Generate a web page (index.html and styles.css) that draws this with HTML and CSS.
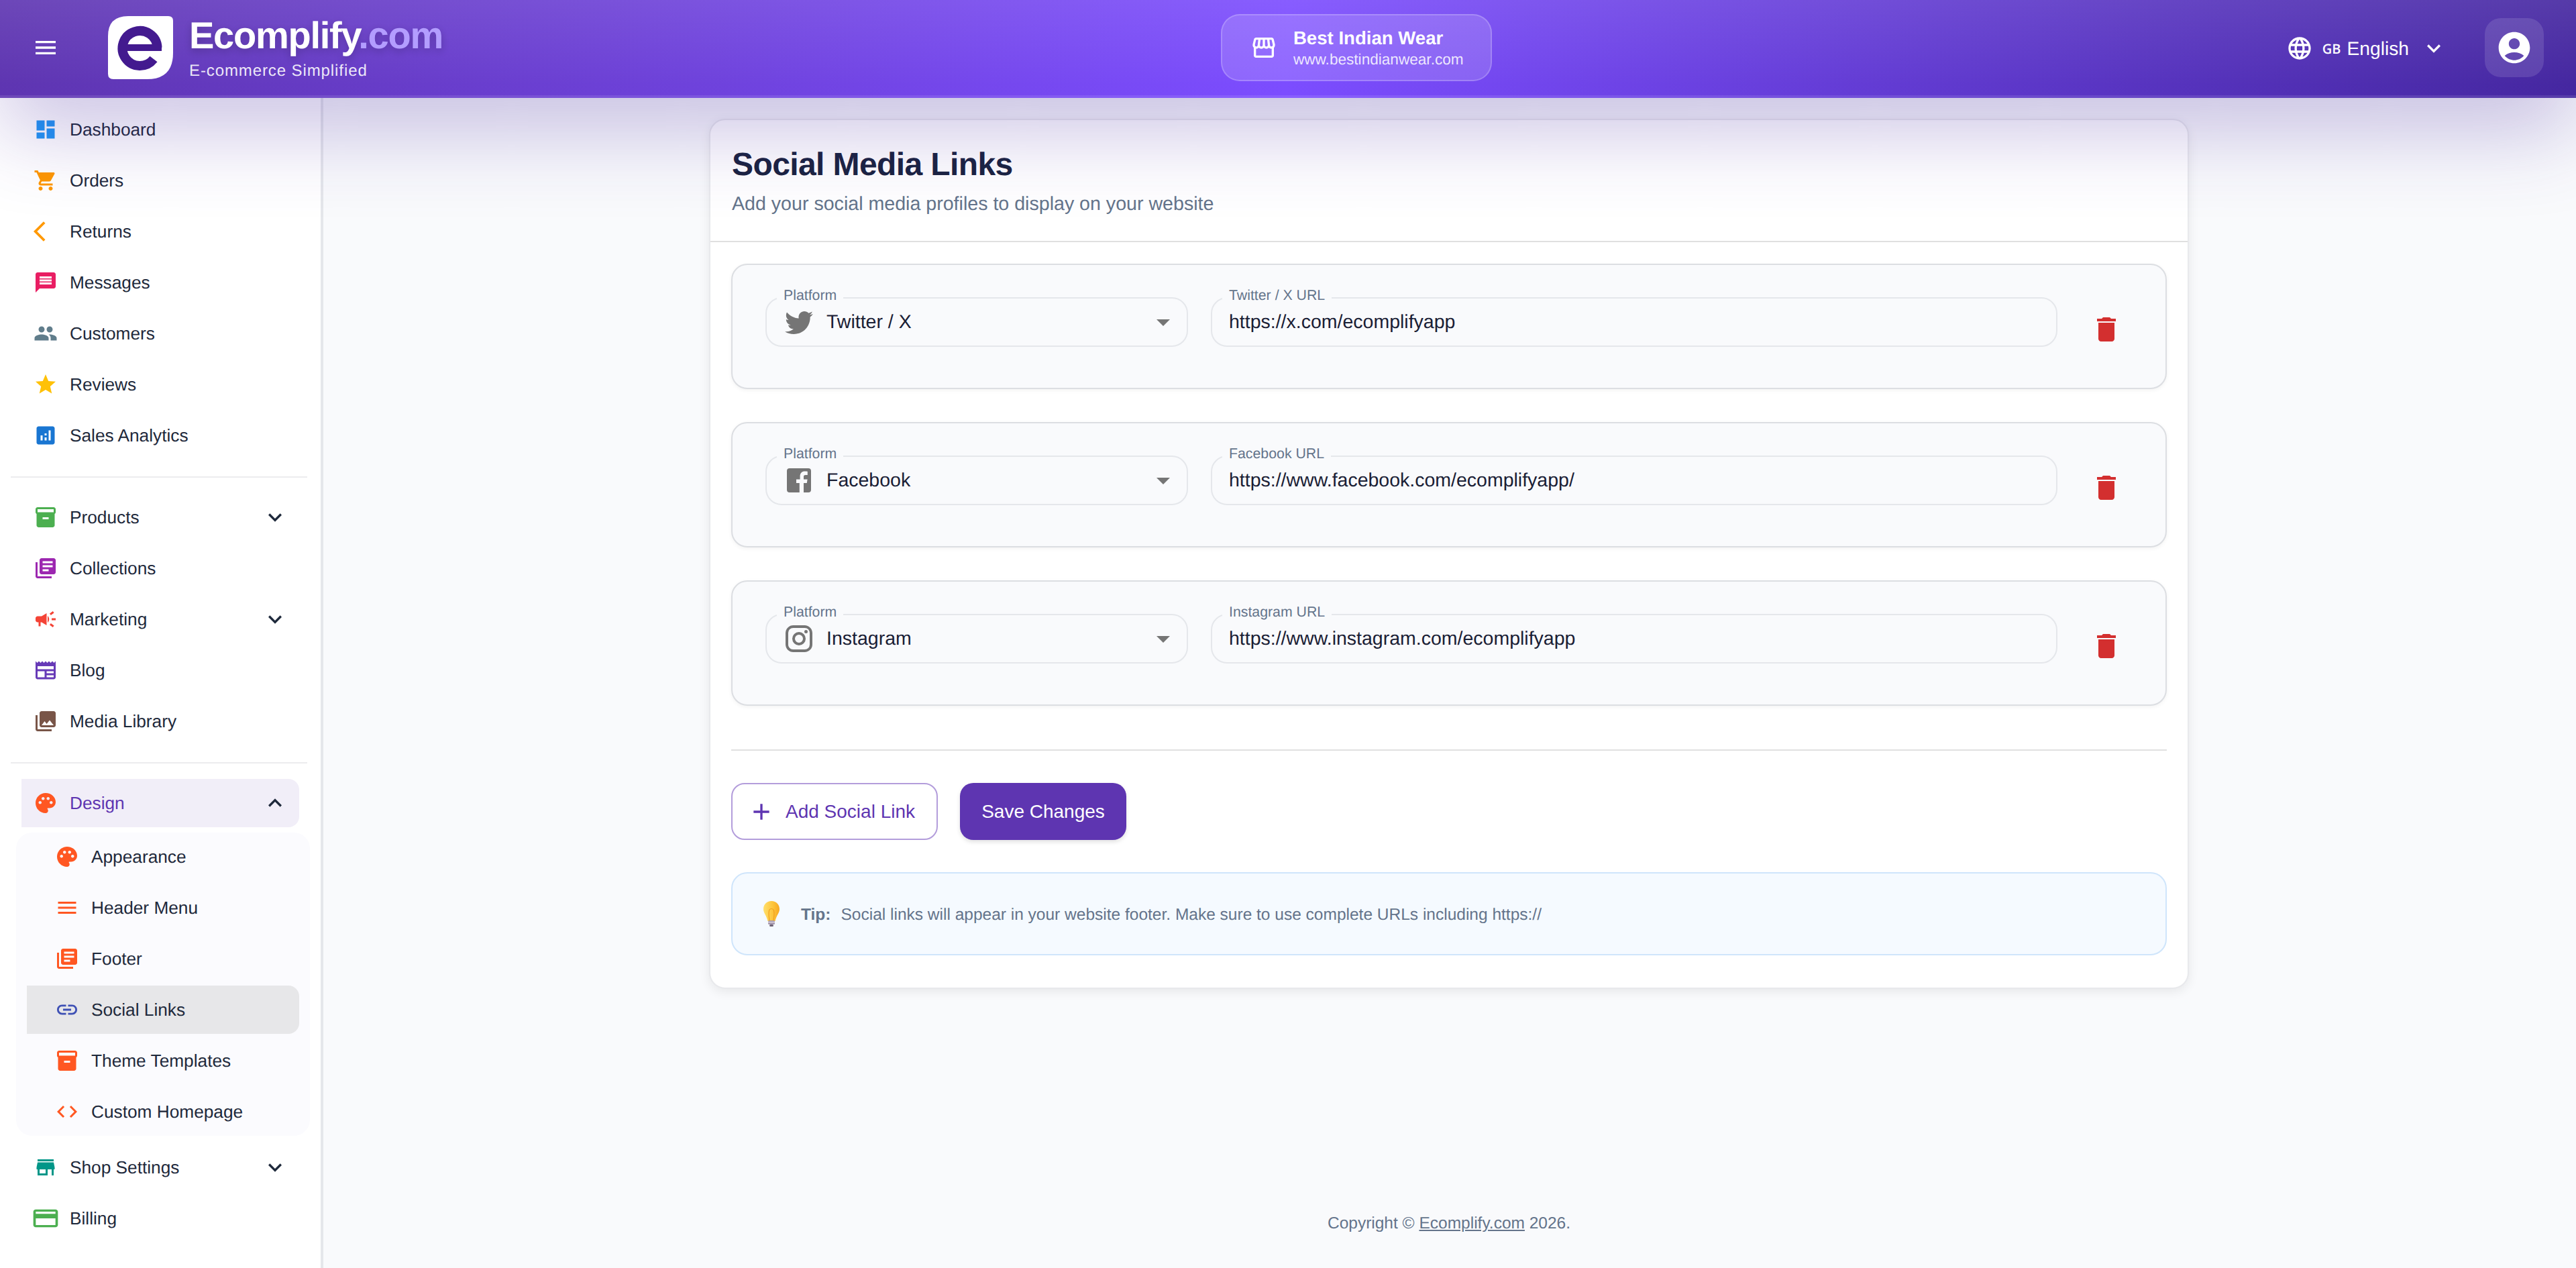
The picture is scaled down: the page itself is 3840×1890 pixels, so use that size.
FILE: index.html
```html
<!DOCTYPE html>
<html lang="en">

<head>
    <meta charset="UTF-8">
    <meta name="viewport" content="width=device-width, initial-scale=1.0">
    <title>Social Media Links</title>
    <link rel="stylesheet" href="styles.css">
</head>

<body>
    <header class="topbar">
        <button class="menu-btn">
            <svg class="icon-40" viewBox="0 0 24 24"><path d="M3 18h18v-2H3v2zm0-5h18v-2H3v2zm0-7v2h18V6H3z"/></svg>
        </button>
        <svg class="logo" viewBox="0 0 97 94">
            <path class="logo-bg" d="M30 0H90Q97 0 97 7V55Q97 94 58 94H8Q0 94 0 86V30Q0 0 30 0Z"/>
            <path class="logo-e" d="M73.5 47A26 26 0 1 0 68 64"/>
            <rect class="logo-bar" x="21" y="42" width="59" height="10"/>
        </svg>
        <div class="brand">
            <div class="brand-name">Ecomplify<span>.com</span></div>
            <div class="brand-tag">E-commerce Simplified</div>
        </div>
        <div class="store-chip">
            <svg class="icon-40" viewBox="0 0 24 24"><path d="M21.9 8.89l-1.05-4.37c-.22-.9-1-1.52-1.91-1.52H5.05c-.9 0-1.69.63-1.9 1.52L2.1 8.89c-.24 1.02-.02 2.06.62 2.88.08.11.19.19.28.29V19c0 1.1.9 2 2 2h14c1.1 0 2-.9 2-2v-6.94c.09-.09.2-.18.28-.28.64-.82.87-1.87.62-2.89zm-2.99-3.9l1.05 4.37c.1.42.01.84-.25 1.17-.14.18-.44.47-.94.47-.61 0-1.14-.49-1.21-1.14L16.98 5l1.93-.01zM13 5h1.96l.54 4.52c.05.39-.07.78-.33 1.07-.22.26-.54.41-.95.41-.67 0-1.22-.59-1.22-1.31V5zM8.49 9.52L9.04 5H11v4.69c0 .72-.55 1.31-1.29 1.31-.34 0-.65-.15-.89-.41-.25-.29-.37-.68-.33-1.07zm-4.45-.16L5.05 5h1.97l-.58 4.86c-.08.65-.6 1.14-1.21 1.14-.49 0-.8-.29-.93-.47-.27-.32-.36-.75-.26-1.17zM5 19v-6.03c.08.01.15.03.23.03.87 0 1.66-.36 2.24-.95.6.6 1.4.95 2.31.95.87 0 1.65-.36 2.23-.93.59.57 1.39.93 2.29.93.84 0 1.64-.35 2.24-.95.58.59 1.37.95 2.24.95.08 0 .15-.02.23-.03V19H5z"/></svg>
            <div>
                <div class="store-name">Best Indian Wear</div>
                <div class="store-url">www.bestindianwear.com</div>
            </div>
        </div>
        <div class="lang">
            <svg class="icon-40" viewBox="0 0 24 24"><path d="M11.99 2C6.47 2 2 6.48 2 12s4.47 10 9.99 10C17.52 22 22 17.52 22 12S17.52 2 11.99 2zm6.93 6h-2.95c-.32-1.25-.78-2.45-1.38-3.56 1.84.63 3.37 1.91 4.33 3.56zM12 4.04c.83 1.2 1.48 2.53 1.91 3.96h-3.82c.43-1.43 1.08-2.76 1.91-3.96zM4.26 14C4.1 13.36 4 12.69 4 12s.1-1.36.26-2h3.38c-.08.66-.14 1.32-.14 2 0 .68.06 1.34.14 2H4.26zm.82 2h2.95c.32 1.25.78 2.45 1.38 3.56-1.84-.63-3.37-1.9-4.33-3.56zm2.95-8H5.08c.96-1.66 2.49-2.93 4.33-3.56C8.81 5.55 8.35 6.75 8.03 8zM12 19.96c-.83-1.2-1.48-2.53-1.91-3.96h3.82c-.43 1.43-1.08 2.76-1.91 3.96zM14.34 14H9.66c-.09-.66-.16-1.32-.16-2 0-.68.07-1.35.16-2h4.68c.09.65.16 1.32.16 2 0 .68-.07 1.34-.16 2zm.25 5.56c.6-1.11 1.06-2.31 1.38-3.56h2.95c-.96 1.65-2.49 2.93-4.33 3.56zM16.36 14c.08-.66.14-1.32.14-2 0-.68-.06-1.34-.14-2h3.38c.16.64.26 1.31.26 2s-.1 1.36-.26 2h-3.38z"/></svg>
            <span class="lang-code">GB</span>
            <span class="lang-name">English</span>
            <svg class="icon-40 lang-arrow" viewBox="0 0 24 24"><path d="M16.59 8.59 12 13.17 7.41 8.59 6 10l6 6 6-6z"/></svg>
        </div>
        <button class="avatar-btn">
            <svg class="icon-56" viewBox="0 0 24 24"><path d="M12 2C6.48 2 2 6.48 2 12s4.48 10 10 10 10-4.48 10-10S17.52 2 12 2zm0 4c1.93 0 3.5 1.57 3.5 3.5S13.93 13 12 13s-3.5-1.57-3.5-3.5S10.07 6 12 6zm0 14c-2.03 0-4.43-.82-6.14-2.88C7.55 15.8 9.68 15 12 15s4.45.8 6.14 2.12C16.43 19.18 14.03 20 12 20z"/></svg>
        </button>
    </header>

    <div class="layout">
        <nav class="sidebar">
            <a class="nav-item"><svg class="nav-icon c-blue" viewBox="0 0 24 24"><path d="M3 13h8V3H3v10zm0 8h8v-6H3v6zm10 0h8V11h-8v10zm0-18v6h8V3h-8z"/></svg><span>Dashboard</span></a>
            <a class="nav-item"><svg class="nav-icon c-orange" viewBox="0 0 24 24"><path d="M7 18c-1.1 0-1.99.9-1.99 2S5.9 22 7 22s2-.9 2-2-.9-2-2-2zM1 2v2h2l3.6 7.59-1.35 2.45c-.16.28-.25.61-.25.96 0 1.1.9 2 2 2h12v-2H7.42c-.14 0-.25-.11-.25-.25l.03-.12.9-1.63h7.45c.75 0 1.41-.41 1.75-1.03l3.58-6.49c.08-.14.12-.31.12-.48 0-.55-.45-1-1-1H5.21l-.94-2H1zm16 16c-1.1 0-1.99.9-1.99 2s.89 2 1.99 2 2-.9 2-2-.9-2-2-2z"/></svg><span>Orders</span></a>
            <a class="nav-item"><svg class="nav-icon c-orange" viewBox="0 0 24 24"><path d="M11.67 3.87 9.9 2.1 0 12l9.9 9.9 1.77-1.77L3.54 12z"/></svg><span>Returns</span></a>
            <a class="nav-item"><svg class="nav-icon c-pink" viewBox="0 0 24 24"><path d="M20 2H4c-1.1 0-1.99.9-1.99 2L2 22l4-4h14c1.1 0 2-.9 2-2V4c0-1.1-.9-2-2-2zm-2 12H6v-2h12v2zm0-3H6V9h12v2zm0-3H6V6h12v2z"/></svg><span>Messages</span></a>
            <a class="nav-item"><svg class="nav-icon c-slate" viewBox="0 0 24 24"><path d="M16 11c1.66 0 2.99-1.34 2.99-3S17.66 5 16 5c-1.66 0-3 1.34-3 3s1.34 3 3 3zm-8 0c1.66 0 2.99-1.34 2.99-3S9.66 5 8 5C6.34 5 5 6.34 5 8s1.34 3 3 3zm0 2c-2.33 0-7 1.17-7 3.5V19h14v-2.5c0-2.33-4.67-3.5-7-3.5zm8 0c-.29 0-.62.02-.97.05 1.16.84 1.97 1.97 1.97 3.45V19h6v-2.5c0-2.33-4.67-3.5-7-3.5z"/></svg><span>Customers</span></a>
            <a class="nav-item"><svg class="nav-icon c-amber" viewBox="0 0 24 24"><path d="M12 17.27 18.18 21l-1.64-7.03L22 9.24l-7.19-.61L12 2 9.19 8.63 2 9.24l5.46 4.73L5.82 21z"/></svg><span>Reviews</span></a>
            <a class="nav-item"><svg class="nav-icon c-navy" viewBox="0 0 24 24"><path d="M19 3H5c-1.1 0-2 .9-2 2v14c0 1.1.9 2 2 2h14c1.1 0 2-.9 2-2V5c0-1.1-.9-2-2-2zM9 17H7v-5h2v5zm4 0h-2v-3h2v3zm0-5h-2v-2h2v2zm4 5h-2V7h2v10z"/></svg><span>Sales Analytics</span></a>

            <div class="nav-divider"></div>

            <a class="nav-item"><svg class="nav-icon c-green" viewBox="0 0 24 24"><path d="M20 2H4c-1 0-2 .9-2 2v3.01c0 .72.43 1.34 1 1.69V20c0 1.1 1.1 2 2 2h14c.9 0 2-.9 2-2V8.7c.57-.35 1-.97 1-1.69V4c0-1.1-1-2-2-2zm-5 12H9v-2h6v2zm5-7H4V4h16v3z"/></svg><span>Products</span><svg class="nav-arrow" viewBox="0 0 24 24"><path d="M16.59 8.59 12 13.17 7.41 8.59 6 10l6 6 6-6z"/></svg></a>
            <a class="nav-item"><svg class="nav-icon c-purple" viewBox="0 0 24 24"><path d="M4 6H2v14c0 1.1.9 2 2 2h14v-2H4V6zm16-4H8c-1.1 0-2 .9-2 2v12c0 1.1.9 2 2 2h12c1.1 0 2-.9 2-2V4c0-1.1-.9-2-2-2zm-1 9H9V9h10v2zm-4 4H9v-2h6v2zm4-8H9V5h10v2z"/></svg><span>Collections</span></a>
            <a class="nav-item"><svg class="nav-icon c-red" viewBox="0 0 24 24"><path d="M18 11v2h4v-2h-4zm-2 6.61c.96.71 2.21 1.65 3.2 2.39.4-.53.8-1.07 1.2-1.6-.99-.74-2.24-1.68-3.2-2.4-.4.54-.8 1.08-1.2 1.61zM20.4 5.6c-.4-.53-.8-1.07-1.2-1.6-.99.74-2.24 1.68-3.2 2.4.4.53.8 1.07 1.2 1.6.96-.72 2.21-1.65 3.2-2.4zM4 9c-1.1 0-2 .9-2 2v2c0 1.1.9 2 2 2h1v4h2v-4h1l5 3V6L8 9H4zm11.5 3c0-1.33-.58-2.53-1.5-3.35v6.69c.92-.81 1.5-2.01 1.5-3.34z"/></svg><span>Marketing</span><svg class="nav-arrow" viewBox="0 0 24 24"><path d="M16.59 8.59 12 13.17 7.41 8.59 6 10l6 6 6-6z"/></svg></a>
            <a class="nav-item"><svg class="nav-icon c-violet" viewBox="0 0 24 24"><path d="M22 3l-1.67 1.67L18.67 3 17 4.67 15.33 3l-1.66 1.67L12 3l-1.67 1.67L8.67 3 7 4.67 5.33 3 3.67 4.67 2 3v16c0 1.1.9 2 2 2h16c1.1 0 2-.9 2-2V3zM11 19H4v-6h7v6zm9 0h-7v-2h7v2zm0-4h-7v-2h7v2zm0-4H4V8h16v3z"/></svg><span>Blog</span></a>
            <a class="nav-item"><svg class="nav-icon c-brown" viewBox="0 0 24 24"><path d="M22 16V4c0-1.1-.9-2-2-2H8c-1.1 0-2 .9-2 2v12c0 1.1.9 2 2 2h12c1.1 0 2-.9 2-2zm-11-4 2.03 2.71L16 11l4 5H8l3-4zM2 6v14c0 1.1.9 2 2 2h14v-2H4V6H2z"/></svg><span>Media Library</span></a>

            <div class="nav-divider"></div>

            <a class="nav-item nav-open"><svg class="nav-icon c-deep" viewBox="0 0 24 24"><path d="M12 2C6.49 2 2 6.49 2 12s4.49 10 10 10c1.38 0 2.5-1.12 2.5-2.5 0-.61-.23-1.2-.64-1.67-.08-.1-.13-.21-.13-.33 0-.28.22-.5.5-.5H16c3.31 0 6-2.69 6-6 0-4.96-4.49-9-10-9zm5.5 11c-.83 0-1.5-.67-1.5-1.5s.67-1.5 1.5-1.5 1.5.67 1.5 1.5-.67 1.5-1.5 1.5zm-3-4c-.83 0-1.5-.67-1.5-1.5S13.67 6 14.5 6s1.5.67 1.5 1.5S15.33 9 14.5 9zM5 11.5c0-.83.67-1.5 1.5-1.5s1.5.67 1.5 1.5S7.33 13 6.5 13 5 12.33 5 11.5zm6-4c0 .83-.67 1.5-1.5 1.5S8 8.33 8 7.5 8.67 6 9.5 6s1.5.67 1.5 1.5z"/></svg><span>Design</span><svg class="nav-arrow" viewBox="0 0 24 24"><path d="M12 8l-6 6 1.41 1.41L12 10.83l4.59 4.58L18 14z"/></svg></a>
            <div class="submenu">
                <a class="sub-item"><svg class="nav-icon c-deep" viewBox="0 0 24 24"><path d="M12 2C6.49 2 2 6.49 2 12s4.49 10 10 10c1.38 0 2.5-1.12 2.5-2.5 0-.61-.23-1.2-.64-1.67-.08-.1-.13-.21-.13-.33 0-.28.22-.5.5-.5H16c3.31 0 6-2.69 6-6 0-4.96-4.49-9-10-9zm5.5 11c-.83 0-1.5-.67-1.5-1.5s.67-1.5 1.5-1.5 1.5.67 1.5 1.5-.67 1.5-1.5 1.5zm-3-4c-.83 0-1.5-.67-1.5-1.5S13.67 6 14.5 6s1.5.67 1.5 1.5S15.33 9 14.5 9zM5 11.5c0-.83.67-1.5 1.5-1.5s1.5.67 1.5 1.5S7.33 13 6.5 13 5 12.33 5 11.5zm6-4c0 .83-.67 1.5-1.5 1.5S8 8.33 8 7.5 8.67 6 9.5 6s1.5.67 1.5 1.5z"/></svg><span>Appearance</span></a>
                <a class="sub-item"><svg class="nav-icon c-deep" viewBox="0 0 24 24"><path d="M3 18h18v-2H3v2zm0-5h18v-2H3v2zm0-7v2h18V6H3z"/></svg><span>Header Menu</span></a>
                <a class="sub-item"><svg class="nav-icon c-deep" viewBox="0 0 24 24"><path d="M4 6H2v14c0 1.1.9 2 2 2h14v-2H4V6zm16-4H8c-1.1 0-2 .9-2 2v12c0 1.1.9 2 2 2h12c1.1 0 2-.9 2-2V4c0-1.1-.9-2-2-2zm-1 9H9V9h10v2zm-4 4H9v-2h6v2zm4-8H9V5h10v2z"/></svg><span>Footer</span></a>
                <a class="sub-item sub-active"><svg class="nav-icon c-indigo" viewBox="0 0 24 24"><path d="M3.9 12c0-1.71 1.39-3.1 3.1-3.1h4V7H7c-2.76 0-5 2.24-5 5s2.24 5 5 5h4v-1.9H7c-1.71 0-3.1-1.39-3.1-3.1zM8 13h8v-2H8v2zm9-6h-4v1.9h4c1.71 0 3.1 1.39 3.1 3.1s-1.39 3.1-3.1 3.1h-4V17h4c2.76 0 5-2.24 5-5s-2.24-5-5-5z"/></svg><span>Social Links</span></a>
                <a class="sub-item"><svg class="nav-icon c-deep" viewBox="0 0 24 24"><path d="M20 2H4c-1 0-2 .9-2 2v3.01c0 .72.43 1.34 1 1.69V20c0 1.1 1.1 2 2 2h14c.9 0 2-.9 2-2V8.7c.57-.35 1-.97 1-1.69V4c0-1.1-1-2-2-2zm-5 12H9v-2h6v2zm5-7H4V4h16v3z"/></svg><span>Theme Templates</span></a>
                <a class="sub-item"><svg class="nav-icon c-deep" viewBox="0 0 24 24"><path d="M9.4 16.6 4.8 12l4.6-4.6L8 6l-6 6 6 6 1.4-1.4zm5.2 0 4.6-4.6-4.6-4.6L16 6l6 6-6 6-1.4-1.4z"/></svg><span>Custom Homepage</span></a>
            </div>
            <a class="nav-item"><svg class="nav-icon c-teal" viewBox="0 0 24 24"><path d="M20 4H4v2h16V4zm1 10v-2l-1-5H4l-1 5v2h1v6h10v-6h4v6h2v-6h1zm-9 4H6v-4h6v4z"/></svg><span>Shop Settings</span><svg class="nav-arrow" viewBox="0 0 24 24"><path d="M16.59 8.59 12 13.17 7.41 8.59 6 10l6 6 6-6z"/></svg></a>
            <a class="nav-item"><svg class="nav-icon nav-icon-wide c-green" viewBox="0 0 24 24" preserveAspectRatio="none"><path d="M20 4H4c-1.11 0-1.99.89-1.99 2L2 18c0 1.11.89 2 2 2h16c1.11 0 2-.89 2-2V6c0-1.11-.89-2-2-2zm0 14H4v-6h16v6zm0-10H4V6h16v2z"/></svg><span>Billing</span></a>
        </nav>

        <main class="main">
            <section class="card">
                <div class="card-head">
                    <h1>Social Media Links</h1>
                    <p>Add your social media profiles to display on your website</p>
                </div>
                <div class="card-body">
                    <div class="link-row">
                        <div class="field-grid">
                            <div class="field">
                                <label>Platform</label>
                                <svg class="brand-icon" viewBox="0 0 24 24"><path d="M22.46 6c-.77.35-1.6.58-2.46.69.88-.53 1.56-1.37 1.88-2.38-.83.5-1.75.85-2.72 1.05C18.37 4.5 17.26 4 16 4c-2.35 0-4.27 1.92-4.27 4.29 0 .34.04.67.11.98C8.28 9.09 5.11 7.38 3 4.79c-.37.63-.58 1.37-.58 2.15 0 1.49.75 2.81 1.91 3.56-.71 0-1.37-.2-1.91-.5v.03c0 2.08 1.48 3.82 3.44 4.21a4.22 4.22 0 0 1-1.93.07 4.28 4.28 0 0 0 4 2.98 8.521 8.521 0 0 1-5.33 1.84c-.34 0-.68-.02-1.02-.06C3.44 20.29 5.7 21 8.12 21 16 21 20.33 14.46 20.33 8.79c0-.19 0-.37-.01-.56.84-.6 1.56-1.36 2.14-2.23z"/></svg>
                                <span class="value">Twitter / X</span>
                                <svg class="drop" viewBox="0 0 24 24"><path d="M7 10l5 5 5-5z"/></svg>
                            </div>
                            <div class="field field-url">
                                <label>Twitter / X URL</label>
                                <span class="value">https://x.com/ecomplifyapp</span>
                            </div>
                        </div>
                        <button class="del-btn"><svg class="brand-icon" viewBox="0 0 24 24"><path d="M6 19c0 1.1.9 2 2 2h8c1.1 0 2-.9 2-2V7H6v12zM19 4h-3.5l-1-1h-5l-1 1H5v2h14V4z"/></svg></button>
                    </div>
                    <div class="link-row">
                        <div class="field-grid">
                            <div class="field">
                                <label>Platform</label>
                                <svg class="brand-icon" viewBox="0 0 24 24"><path d="M5 3h14a2 2 0 0 1 2 2v14a2 2 0 0 1-2 2h-3.500v-7h2.400l.4-2.800h-2.800V9.400c0-.8.2-1.400 1.400-1.400h1.500V5.400c-.3 0-1.100-.1-2.100-.1-2.100 0-3.500 1.300-3.500 3.600v2.300H10v2.800h2.400v7H5a2 2 0 0 1-2-2V5a2 2 0 0 1 2-2z"/></svg>
                                <span class="value">Facebook</span>
                                <svg class="drop" viewBox="0 0 24 24"><path d="M7 10l5 5 5-5z"/></svg>
                            </div>
                            <div class="field field-url">
                                <label>Facebook URL</label>
                                <span class="value">https://www.facebook.com/ecomplifyapp/</span>
                            </div>
                        </div>
                        <button class="del-btn"><svg class="brand-icon" viewBox="0 0 24 24"><path d="M6 19c0 1.1.9 2 2 2h8c1.1 0 2-.9 2-2V7H6v12zM19 4h-3.5l-1-1h-5l-1 1H5v2h14V4z"/></svg></button>
                    </div>
                    <div class="link-row">
                        <div class="field-grid">
                            <div class="field">
                                <label>Platform</label>
                                <svg class="brand-icon" viewBox="0 0 24 24"><path d="M7.8 2h8.4C19.4 2 22 4.6 22 7.8v8.4a5.8 5.8 0 0 1-5.8 5.8H7.8C4.6 22 2 19.4 2 16.2V7.8A5.8 5.8 0 0 1 7.8 2m-.2 2A3.6 3.6 0 0 0 4 7.6v8.8C4 18.39 5.61 20 7.6 20h8.8a3.6 3.6 0 0 0 3.6-3.6V7.6C20 5.61 18.39 4 16.4 4H7.6m9.65 1.5a1.25 1.25 0 0 1 1.25 1.25A1.25 1.25 0 0 1 17.25 8 1.25 1.25 0 0 1 16 6.75a1.25 1.25 0 0 1 1.25-1.25M12 7a5 5 0 0 1 5 5 5 5 0 0 1-5 5 5 5 0 0 1-5-5 5 5 0 0 1 5-5m0 2a3 3 0 0 0-3 3 3 3 0 0 0 3 3 3 3 0 0 0 3-3 3 3 0 0 0-3-3z"/></svg>
                                <span class="value">Instagram</span>
                                <svg class="drop" viewBox="0 0 24 24"><path d="M7 10l5 5 5-5z"/></svg>
                            </div>
                            <div class="field field-url">
                                <label>Instagram URL</label>
                                <span class="value">https://www.instagram.com/ecomplifyapp</span>
                            </div>
                        </div>
                        <button class="del-btn"><svg class="brand-icon" viewBox="0 0 24 24"><path d="M6 19c0 1.1.9 2 2 2h8c1.1 0 2-.9 2-2V7H6v12zM19 4h-3.5l-1-1h-5l-1 1H5v2h14V4z"/></svg></button>
                    </div>

                    <div class="body-divider"></div>

                    <div class="actions">
                        <button class="btn btn-outline"><svg class="icon-40" viewBox="0 0 24 24"><path d="M19 13h-6v6h-2v-6H5v-2h6V5h2v6h6v2z"/></svg>Add Social Link</button>
                        <button class="btn btn-solid">Save Changes</button>
                    </div>

                    <div class="tip">
                        <svg class="bulb" viewBox="0 0 24 38">
                            <defs>
                                <linearGradient id="bulbFill" x1="0" y1="0" x2="1" y2="0">
                                    <stop offset="0" stop-color="#ffdf6b"/>
                                    <stop offset="0.6" stop-color="#fdc43a"/>
                                    <stop offset="1" stop-color="#f6a821"/>
                                </linearGradient>
                            </defs>
                            <path fill="url(#bulbFill)" d="M12 0C5 0 0 5 0 12c0 6 5 10 6.500 18h11C19 22 24 18 24 12 24 5 19 0 12 0z"/>
                            <path fill="none" stroke="#f0a020" stroke-width="1.2" d="M9 29C8 22 7 17 9 13c1.500-2 4.500-2 6 0 2 4 1 9 0 16"/>
                            <rect x="7" y="29" width="10" height="6" rx="1.500" fill="#a89bb0"/>
                            <rect x="7" y="31" width="10" height="1" fill="#e6e0ea"/>
                            <rect x="9" y="35" width="6" height="3" rx="1.500" fill="#6f6478"/>
                        </svg>
                        <span class="tip-text"><b>Tip:</b>Social links will appear in your website footer. Make sure to use complete URLs including https://</span>
                    </div>
                </div>
            </section>
            <footer class="copy">Copyright © <a>Ecomplify.com</a> 2026.</footer>
        </main>
    </div>
</body>

</html>
```
FILE: styles.css
```css
* {
    box-sizing: border-box;
    padding: 0;
    margin: 0;
}

html,
body {
    height: 100%;
    overflow: hidden;
}

body {
    display: flex;
    flex-direction: column;
    font-family: "Liberation Sans", Arial, sans-serif;
    color: #1e293b;
    background-color: #f9fafc;
    text-rendering: geometricPrecision;
}

svg {
    display: block;
    flex: none;
    fill: currentColor;
}

button {
    border: 0;
    background: none;
    font: inherit;
    color: inherit;
}

.icon-40 {
    width: 40px;
    height: 40px;
}

.icon-56 {
    width: 56px;
    height: 56px;
}

/* top bar */
.topbar {
    position: relative;
    z-index: 10;
    flex: none;
    display: flex;
    align-items: center;
    height: 146px;
    color: #fff;
    background: linear-gradient(180deg, rgba(255, 255, 255, .09), rgba(255, 255, 255, 0) 90%), linear-gradient(92deg, #5e35b1 0%, #7c4dff 50%, #4527a0 100%);
    border-bottom: 4px solid rgba(255, 255, 255, .1);
    background-clip: padding-box, border-box;
    box-shadow: 0 44px 128px rgba(69, 39, 160, .3);
}

.menu-btn {
    margin-left: 48px;
    color: #fff;
}

.logo {
    width: 97px;
    height: 94px;
    margin-left: 73px;
}

.logo-bg {
    fill: #fff;
}

.logo-e {
    fill: none;
    stroke: #431a8f;
    stroke-width: 14;
}

.logo-bar {
    fill: #431a8f;
}

.brand {
    margin-left: 24px;
}

.brand-name {
    font-size: 56px;
    line-height: 64px;
    font-weight: 700;
    letter-spacing: -1.25px;
    text-shadow: 0 4px 12px rgba(0, 0, 0, .2);
    transform: translateY(-2px);
}

.brand-name span {
    color: #b39dff;
}

.brand-tag {
    margin-top: 5px;
    font-size: 24px;
    line-height: 28px;
    letter-spacing: .9px;
    color: rgba(255, 255, 255, .9);
}

.store-chip {
    display: flex;
    align-items: center;
    gap: 24px;
    width: 404px;
    height: 100px;
    margin-left: 1160px;
    padding-left: 42px;
    border: 2px solid rgba(255, 255, 255, .2);
    border-radius: 28px;
    background-color: rgba(255, 255, 255, .15);
}

.store-name {
    font-size: 27.6px;
    line-height: 34px;
    font-weight: 700;
}

.store-url {
    margin-top: 2px;
    font-size: 22.6px;
    line-height: 26px;
    color: rgba(255, 255, 255, .85);
}

.lang {
    display: flex;
    align-items: center;
    margin-left: auto;
    padding-top: 2px;
}

.lang-code {
    margin-left: 14px;
    font-family: "Open Sans", sans-serif;
    font-size: 20px;
    font-weight: 600;
}

.lang-name {
    margin-left: 9px;
    font-size: 28.2px;
}

.lang-arrow {
    margin-left: 17px;
}

.avatar-btn {
    display: flex;
    align-items: center;
    justify-content: center;
    width: 88px;
    height: 88px;
    margin-left: 56px;
    margin-right: 48px;
    border-radius: 24px;
    color: #fff;
    background-color: rgba(255, 255, 255, .12);
}

/* sidebar */
.layout {
    flex: 1;
    display: flex;
    min-height: 0;
}

.sidebar {
    flex: none;
    width: 482px;
    padding-top: 11px;
    background-color: #fff;
    border-right: 4px solid #e5e7eb;
}

.nav-item,
.sub-item {
    display: flex;
    align-items: center;
    height: 72px;
    margin-right: 32px;
    font-size: 26.25px;
    color: #1e293b;
}

.nav-item {
    margin-left: 32px;
    margin-bottom: 4px;
    padding-left: 18px;
    padding-right: 16px;
}

.nav-item span {
    margin-left: 18px;
}

.nav-arrow {
    width: 40px;
    height: 40px;
    margin-left: auto;
}

.nav-open {
    margin-top: 1px;
    margin-bottom: 0;
    border-radius: 0 16px 16px 0;
    background-color: #f1eef8;
    color: #5e35b1;
}

.nav-open .nav-arrow {
    color: #1e293b;
}

.nav-divider {
    height: 2px;
    margin: 25px 20px 23px 16px;
    background-color: #ececee;
}

.nav-icon {
    width: 36px;
    height: 36px;
}

.nav-icon-wide {
    width: 44px;
    height: 40px;
    margin: 0 -4px;
}

.submenu {
    margin: 8px 16px 11px 24px;
    border-radius: 24px;
    background-color: #fbfbfe;
}

.sub-item {
    margin: 0 16px 4px 16px;
    padding-left: 42px;
}

.sub-item:last-child {
    margin-bottom: 0;
}

.sub-item span {
    margin-left: 18px;
}

.sub-active {
    border-radius: 0 16px 16px 0;
    background-color: #e7e7e9;
}

.c-blue { color: #2196f3; }
.c-orange { color: #ff9800; }
.c-pink { color: #e91e63; }
.c-slate { color: #607d8b; }
.c-amber { color: #ffc107; }
.c-navy { color: #1976d2; }
.c-green { color: #4caf50; }
.c-purple { color: #9c27b0; }
.c-red { color: #f44336; }
.c-violet { color: #673ab7; }
.c-brown { color: #795548; }
.c-deep { color: #ff5722; }
.c-indigo { color: #3f51b5; }
.c-teal { color: #009688; }

/* main content */
.main {
    flex: 1;
    display: flex;
    flex-direction: column;
    align-items: center;
    justify-content: space-between;
    padding-top: 31px;
    padding-right: 2px;
    padding-bottom: 52px;
}

.card {
    width: 2206px;
    border: 2px solid #e8e9ec;
    border-radius: 24px;
    background-color: #fff;
    box-shadow: 0 4px 16px rgba(0, 0, 0, .08);
}

.card-head {
    padding: 39px 32px 36px;
    border-bottom: 2px solid #e0e0e0;
}

.card-head h1 {
    font-size: 48px;
    line-height: 56px;
    font-weight: 700;
    letter-spacing: -.6px;
    color: #1a2340;
}

.card-head p {
    margin-top: 10px;
    margin-bottom: -1px;
    font-size: 28.6px;
    line-height: 40px;
    color: #64748b;
}

.card-body {
    padding: 32px 31px 48px;
}

.link-row {
    display: flex;
    align-items: flex-start;
    height: 187px;
    margin-bottom: 49px;
    padding: 48px 40px 0 49px;
    border: 2px solid #dcdee2;
    border-radius: 24px;
    background-color: #f9fafc;
    box-shadow: 0 2px 6px rgba(0, 0, 0, .05);
}

.field-grid {
    flex: 1;
    display: grid;
    grid-template-columns: 630px 1262px;
    gap: 34px;
}

.field {
    position: relative;
    display: flex;
    align-items: center;
    height: 74px;
    padding-left: 24px;
    padding-right: 11px;
    border: 2px solid #e5e7eb;
    border-radius: 24px;
}

.field-url {
    padding-left: 25px;
}

.field label {
    position: absolute;
    top: -17px;
    left: 15px;
    padding: 0 10px;
    font-size: 21.3px;
    line-height: 24px;
    color: #64748b;
    background-color: #f9fafc;
}

.brand-icon {
    width: 48px;
    height: 48px;
}

.field .brand-icon,
.drop {
    color: #757575;
}

.value {
    font-size: 28.5px;
    color: #1a2035;
}

.field .brand-icon + .value {
    margin-left: 17px;
}

.drop {
    width: 48px;
    height: 48px;
    margin-left: auto;
}

.del-btn {
    flex: none;
    display: flex;
    align-items: center;
    justify-content: center;
    width: 96px;
    height: 96px;
    margin-left: 25px;
    color: #d32f2f;
}

.body-divider {
    height: 2px;
    margin-top: 65px;
    background-color: #e0e0e0;
}

.actions {
    display: flex;
    gap: 33px;
    margin-top: 48px;
}

.btn {
    display: flex;
    align-items: center;
    height: 85px;
    border-radius: 20px;
    font-size: 28px;
}

.btn-outline {
    width: 308px;
    padding-left: 23px;
    border: 2px solid #b39ddb;
    color: #5e35b1;
}

.btn-outline svg {
    margin-right: 16px;
}

.btn-solid {
    justify-content: center;
    width: 248px;
    color: #fff;
    background-color: #5e35b1;
    box-shadow: 0 3px 6px rgba(0, 0, 0, .12);
}

.tip {
    display: flex;
    align-items: center;
    height: 124px;
    margin-top: 48px;
    padding-left: 46px;
    border: 2px solid #cfe5fb;
    border-radius: 24px;
    background-color: #f5faff;
}

.bulb {
    width: 24px;
    height: 38px;
}

.tip-text {
    margin-left: 32px;
    padding-top: 3px;
    font-size: 24.5px;
    color: #64748b;
}

.tip-text b {
    margin-right: 15px;
}

.copy {
    font-size: 24.5px;
    line-height: 28px;
    color: #64748b;
}

.copy a {
    color: inherit;
    text-decoration: underline;
}
```
